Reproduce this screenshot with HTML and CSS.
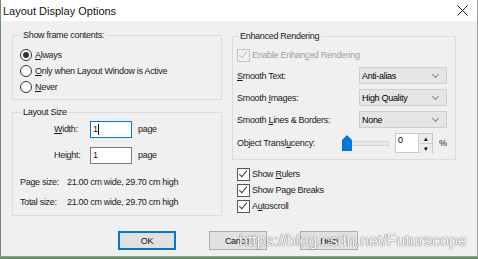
FILE: index.html
```html
<!DOCTYPE html>
<html lang="en">
<head>
    <meta charset="UTF-8">
    <title>Layout Display Options</title>
    <link rel="stylesheet" href="styles.css">
</head>
<body>
    <div class="window">
        <div class="titlebar">
            <span class="title">Layout Display Options</span>
            <svg class="close" width="11" height="11" viewBox="0 0 11 11">
                <path d="M0.5 0.5 L10.5 10.5 M10.5 0.5 L0.5 10.5" stroke="#222" stroke-width="1" fill="none"/>
            </svg>
        </div>
        <div class="content">
            <div class="columns">
                <div class="col-left">
                    <fieldset class="group group-frame">
                        <legend>Show frame contents:</legend>
                        <div class="radio-row tall"><span class="radio checked"></span><span><u>A</u>lways</span></div>
                        <div class="radio-row"><span class="radio"></span><span><u>O</u>nly when Layout Window is Active</span></div>
                        <div class="radio-row"><span class="radio"></span><span><u>N</u>ever</span></div>
                    </fieldset>
                    <fieldset class="group group-size">
                        <legend>Layout Size</legend>
                        <div class="field-row first">
                            <span class="field-label"><u>W</u>idth:</span>
                            <span class="textbox focused">1<span class="caret"></span></span>
                            <span class="unit">page</span>
                        </div>
                        <div class="field-row">
                            <span class="field-label">Hei<u>g</u>ht:</span>
                            <span class="textbox">1</span>
                            <span class="unit">page</span>
                        </div>
                        <div class="info-row first">
                            <span class="info-label">Page size:</span>
                            <span>21.00 cm wide, 29.70 cm high</span>
                        </div>
                        <div class="info-row">
                            <span class="info-label">Total size:</span>
                            <span>21.00 cm wide, 29.70 cm high</span>
                        </div>
                    </fieldset>
                </div>
                <div class="col-right">
                    <fieldset class="group group-render">
                        <legend>Enhanced Rendering</legend>
                        <div class="check-row disabled"><span class="checkbox on"></span><span>Enable Enhan<u>c</u>ed Rendering</span></div>
                        <div class="option-row first">
                            <span class="option-label"><u>S</u>mooth Text:</span>
                            <span class="select">Anti-alias<span class="chevron"></span></span>
                        </div>
                        <div class="option-row">
                            <span class="option-label">Smooth <u>I</u>mages:</span>
                            <span class="select">High Quality<span class="chevron"></span></span>
                        </div>
                        <div class="option-row">
                            <span class="option-label">Smooth <u>L</u>ines &amp; Borders:</span>
                            <span class="select">None<span class="chevron"></span></span>
                        </div>
                        <div class="slider-row">
                            <span class="slider-label">Object Transl<u>u</u>cency:</span>
                            <span class="slider">
                                <svg class="thumb" width="10" height="16" viewBox="0 0 10 16">
                                    <path d="M0 5 L5 0 L10 5 V16 H0 Z" fill="#0078d7"/>
                                </svg>
                                <span class="track"></span>
                            </span>
                            <span class="spin">
                                <span class="spin-value">0</span>
                                <span class="spin-buttons">
                                    <span class="spin-btn">&#9652;</span>
                                    <span class="spin-btn">&#9662;</span>
                                </span>
                            </span>
                            <span class="percent">%</span>
                        </div>
                    </fieldset>
                    <div class="checks">
                        <div class="check-row"><span class="checkbox on"></span><span>Show <u>R</u>ulers</span></div>
                        <div class="check-row"><span class="checkbox on"></span><span>Show Pa<u>g</u>e Breaks</span></div>
                        <div class="check-row"><span class="checkbox on"></span><span>A<u>u</u>toscroll</span></div>
                    </div>
                </div>
            </div>
            <div class="buttons">
                <button class="btn default">OK</button>
                <button class="btn">Cancel</button>
                <button class="btn">Help</button>
            </div>
        </div>
        <div class="watermark">https://blog.csdn.net/Futurscope</div>
    </div>
</body>
</html>
```

FILE: styles.css
```css
body {
    margin: 0;
    background-color: #6f8f70;
    font-family: 'Liberation Sans', Arial, sans-serif;
    font-size: 9px;
    letter-spacing: -0.3px;
    color: #1a1a1a;
}
.window {
    position: relative;
    margin-left: 1px;
    width: 477px;
    height: 257px;
    box-sizing: border-box;
    border-right: 1px solid #9a9a9a;
    border-bottom: 1px solid #9a9a9a;
    background-color: #f0f0f0;
    overflow: hidden;
}
.titlebar {
    height: 21px;
    background-color: #ffffff;
    display: flex;
    align-items: center;
    justify-content: space-between;
    padding: 0 9px 0 2px;
}
.title {
    font-size: 11px;
    letter-spacing: 0;
    color: #111;
}
.close {
    display: block;
}
.content {
    padding: 0 0 0 11px;
}
.columns {
    display: flex;
    gap: 10px;
}
.col-left {
    width: 210px;
    padding-top: 8px;
}
.col-right {
    width: 224px;
    padding-top: 9px;
}
u {
    text-decoration: underline;
    text-underline-offset: 1px;
}

/* group boxes */
.group {
    margin: 0;
    padding: 0;
    border: 1px solid #dcdcdc;
    min-width: 0;
}
.group legend {
    margin-left: 1px;
    padding: 0 2px;
    line-height: 12px;
    height: 12px;
}
.group-frame {
    padding: 5px 0 4px 7px;
}
.group-size {
    margin-top: 6px;
    padding: 2px 0 5px 7px;
}
.group-render {
    padding: 5px 0 6px 4px;
}

/* radios */
.radio-row {
    display: flex;
    align-items: center;
    gap: 3px;
    height: 16px;
}
.radio-row.tall {
    height: 17px;
}
.radio {
    width: 10px;
    height: 10px;
    border: 1px solid #333;
    border-radius: 50%;
    background-color: #fff;
    display: flex;
    align-items: center;
    justify-content: center;
}
.radio.checked::after {
    content: '';
    width: 6px;
    height: 6px;
    border-radius: 50%;
    background-color: #333;
}

/* layout size */
.field-row {
    display: flex;
    align-items: center;
    height: 18px;
    margin-top: 8px;
}
.field-row.first {
    margin-top: 0;
}
.field-label {
    width: 36px;
    margin-left: 34px;
}
.textbox {
    width: 38px;
    height: 15px;
    line-height: 15px;
    border: 1px solid #7a7a7a;
    background-color: #fff;
    padding-left: 2px;
    display: flex;
    align-items: center;
}
.textbox.focused {
    border-color: #0078d7;
}
.caret {
    width: 1px;
    height: 11px;
    background-color: #000;
}
.unit {
    margin-left: 6px;
}
.info-row {
    display: flex;
    align-items: center;
    height: 16px;
    margin-top: 4px;
}
.info-row.first {
    margin-top: 10px;
}
.info-label {
    width: 47px;
}

/* enhanced rendering */
.check-row {
    display: flex;
    align-items: center;
    gap: 2px;
    height: 16px;
}
.check-row.disabled {
    color: #a0a0a0;
}
.checkbox {
    width: 11px;
    height: 11px;
    border: 1px solid #555;
    background-color: #fff;
    position: relative;
}
.checkbox.on::after {
    content: '';
    position: absolute;
    left: 3px;
    top: 0;
    width: 3px;
    height: 7px;
    border-right: 1px solid #333;
    border-bottom: 1px solid #333;
    transform: rotate(40deg);
}
.check-row.disabled .checkbox {
    border-color: #c4c4c4;
    background-color: transparent;
}
.check-row.disabled .checkbox.on::after {
    border-color: #c4c4c4;
}
.option-row {
    display: flex;
    align-items: center;
    height: 17px;
    margin-top: 5px;
}
.option-row.first {
    margin-top: 4px;
}
.option-label {
    width: 122px;
}
.select {
    width: 84px;
    height: 15px;
    border: 1px solid #cfcfcf;
    background-color: #e5e5e5;
    padding-left: 2px;
    display: flex;
    align-items: center;
    justify-content: space-between;
    color: #000;
}
.chevron {
    width: 4px;
    height: 4px;
    margin: 0 8px 3px 0;
    border-right: 1px solid #888;
    border-bottom: 1px solid #888;
    transform: rotate(45deg);
}
.slider-row {
    display: flex;
    align-items: center;
    height: 20px;
    margin-top: 5px;
}
.slider-label {
    width: 105px;
}
.slider {
    width: 47px;
    display: flex;
    align-items: center;
}
.thumb {
    display: block;
}
.track {
    width: 36px;
    height: 3px;
    background-color: #e7e7e7;
    border: 1px solid #d6d6d6;
    border-left: none;
}
.spin {
    margin-left: 6px;
    width: 38px;
    height: 20px;
    box-sizing: border-box;
    border: 1px solid #c8c8c8;
    background-color: #fff;
    display: flex;
}
.spin-value {
    flex: 1;
    padding: 1px 0 0 2px;
    color: #000;
}
.spin-buttons {
    width: 13px;
    display: flex;
    flex-direction: column;
    border-left: 1px solid #d0d0d0;
}
.spin-btn {
    flex: 1;
    background-color: #ececec;
    font-size: 7px;
    letter-spacing: 0;
    line-height: 9px;
    text-align: center;
    color: #000;
}
.spin-btn + .spin-btn {
    border-top: 1px solid #d0d0d0;
}
.percent {
    margin-left: 6px;
}
.checks {
    margin-top: 6px;
    padding-left: 5px;
}

/* buttons */
.buttons {
    display: flex;
    gap: 33px;
    margin: 15px 0 0 106px;
}
.btn {
    width: 58px;
    height: 19px;
    padding: 0;
    border: 1px solid #adadad;
    background-color: #e1e1e1;
    font-family: 'Liberation Sans', Arial, sans-serif;
    font-size: 9px;
    letter-spacing: -0.3px;
    color: #111;
}
.btn.default {
    border-color: #0078d7;
    box-shadow: inset 0 0 0 1px #0078d7;
}
.watermark {
    position: absolute;
    left: 238px;
    top: 231px;
    font-size: 16px;
    line-height: 20px;
    letter-spacing: 0;
    color: #fafafa;
    text-shadow: 0 0 1px #6a6a6a, 0 0 1px #6a6a6a;
}
```
